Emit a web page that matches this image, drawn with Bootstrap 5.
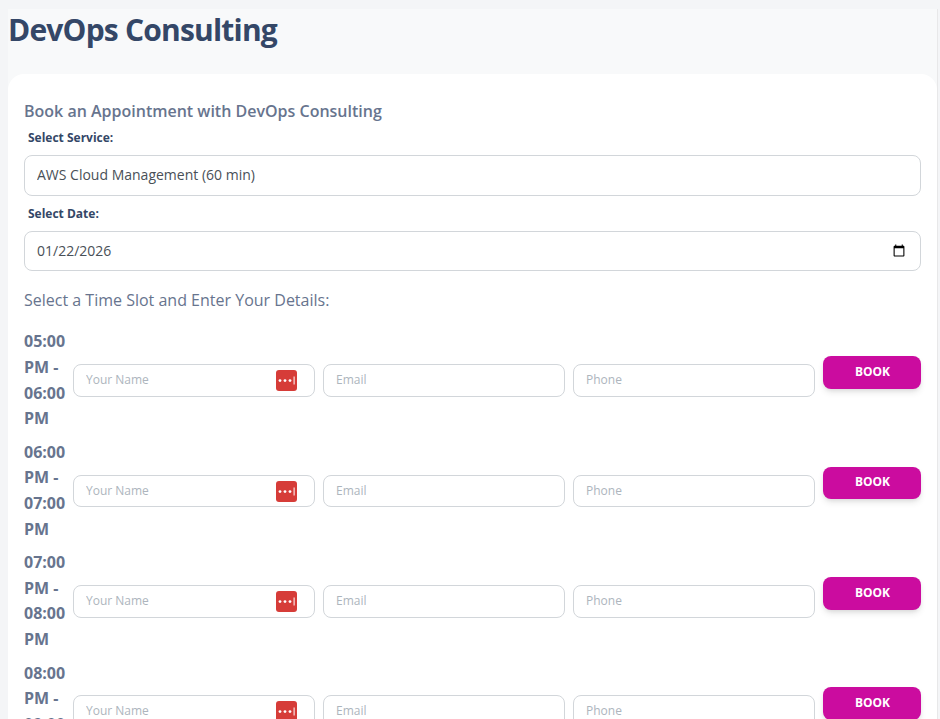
<!DOCTYPE html>
<html lang="en">
<head>
<meta charset="utf-8">
<meta name="viewport" content="width=device-width, initial-scale=1">
<title>DevOps Consulting</title>
<link href="https://cdn.jsdelivr.net/npm/bootstrap@5.3.0/dist/css/bootstrap.min.css" rel="stylesheet">
<style>
body{font-family:"Open Sans",sans-serif;font-size:16px;line-height:1.6;color:#67748e;background:#f4f5f7;height:719px;overflow:hidden}
.page-area{margin:9px 2px 0 8px;background:#f8f9fa;border-right:1px solid #e8e8e9;height:710px;overflow:hidden}
.page-title{font-size:30px;font-weight:700;line-height:41px;letter-spacing:-.8px;color:#344767;height:65px;margin:0}
.booking{border:0;border-radius:16px;background:#fff;padding:24px 16px;height:900px}
.booking-title{font-size:16px;font-weight:600;line-height:26px;margin:0 0 4px;color:#67748e}
.field-label{display:block;font-size:12px;font-weight:700;line-height:19px;color:#344767;margin:0 0 8px 4px}
.form-control{border:1px solid #d2d6da;border-radius:8px;color:#495057;font-size:14px;line-height:22.4px;padding:8px 12px;background:#fff}
.service-field{height:41px;margin-bottom:8px;appearance:none}
.date-field{height:40px;margin-bottom:17px}
.slot-prompt{line-height:25.6px;margin:0 0 15.85px}
.slot{display:grid;grid-template-columns:41px 1fr 1fr 1fr 98px;gap:8px;align-items:center;margin-bottom:8px}
.slot-time{font-weight:700;overflow-wrap:normal;color:#67748e}
.slot .form-control{height:32.6px;font-size:12px;line-height:19.2px;padding:4px 12px 5.6px}
.form-control::placeholder{color:#adb5bd;opacity:1}
.key-icon{position:absolute;left:203px;top:6px}
.book-btn{background:#cb0c9f;color:#fff;font-size:12px;font-weight:700;line-height:16.8px;height:32.6px;padding:0 0 .6px 1px;border:0;border-radius:8px;margin-bottom:16px;box-shadow:0 4px 7px -1px rgba(0,0,0,.11),0 2px 4px -1px rgba(0,0,0,.07)}
.book-btn:hover{background:#cb0c9f;color:#fff}
</style>
</head>
<body>
<svg class="d-none"><symbol id="key" viewBox="0 0 21 21"><rect width="21" height="21" rx="3" fill="#d63c38"/><g fill="#fff"><circle cx="4" cy="10.6" r="1.4"/><circle cx="9" cy="10.6" r="1.4"/><circle cx="14" cy="10.6" r="1.4"/><rect x="17.6" y="6.5" width="1" height="8"/></g></symbol></svg>
<main class="page-area">
<h1 class="page-title">DevOps Consulting</h1>
<section class="card booking">
<h2 class="booking-title">Book an Appointment with DevOps Consulting</h2>
<form>
<label class="field-label" for="service">Select Service:</label>
<select class="form-control service-field" id="service"><option>AWS Cloud Management (60 min)</option></select>
<label class="field-label" for="date">Select Date:</label>
<input class="form-control date-field" id="date" type="date" value="2026-01-22">
</form>
<p class="slot-prompt">Select a Time Slot and Enter Your Details:</p>
<div class="slot"><div class="slot-time">05:00 PM&nbsp;- 06:00 PM</div><div class="position-relative"><input class="form-control" placeholder="Your Name"><svg class="key-icon" width="21" height="21"><use href="#key"/></svg></div><input class="form-control" placeholder="Email"><input class="form-control" placeholder="Phone"><button class="btn book-btn" type="button">BOOK</button></div>
<div class="slot"><div class="slot-time">06:00 PM&nbsp;- 07:00 PM</div><div class="position-relative"><input class="form-control" placeholder="Your Name"><svg class="key-icon" width="21" height="21"><use href="#key"/></svg></div><input class="form-control" placeholder="Email"><input class="form-control" placeholder="Phone"><button class="btn book-btn" type="button">BOOK</button></div>
<div class="slot"><div class="slot-time">07:00 PM&nbsp;- 08:00 PM</div><div class="position-relative"><input class="form-control" placeholder="Your Name"><svg class="key-icon" width="21" height="21"><use href="#key"/></svg></div><input class="form-control" placeholder="Email"><input class="form-control" placeholder="Phone"><button class="btn book-btn" type="button">BOOK</button></div>
<div class="slot"><div class="slot-time">08:00 PM&nbsp;- 09:00 PM</div><div class="position-relative"><input class="form-control" placeholder="Your Name"><svg class="key-icon" width="21" height="21"><use href="#key"/></svg></div><input class="form-control" placeholder="Email"><input class="form-control" placeholder="Phone"><button class="btn book-btn" type="button">BOOK</button></div>
</section>
</main>
<script src="https://cdn.jsdelivr.net/npm/bootstrap@5.3.0/dist/js/bootstrap.bundle.min.js"></script>
</body>
</html>
